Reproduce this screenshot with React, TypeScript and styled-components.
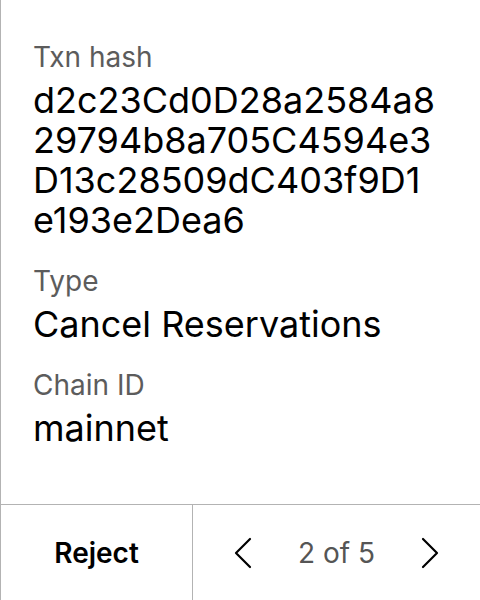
import React from 'react';
import styled, { createGlobalStyle } from 'styled-components';

const GlobalStyle = createGlobalStyle`
  *, *::before, *::after {
    box-sizing: border-box;
  }
  html, body {
    margin: 0;
    padding: 0;
    background: #fff;
  }
  body {
    font-family: "Inter", "Liberation Sans", sans-serif;
  }
`;

const Panel = styled.div`
  width: 480px;
  height: 600px;
  display: flex;
  flex-direction: column;
  border-left: 1px solid #b3b3b3;
  background: #fff;
`;

const Details = styled.div`
  flex: 1;
  padding: 40px 40px 0 32px;
  display: flex;
  flex-direction: column;
  gap: 24px;
`;

const Field = styled.div`
  display: flex;
  flex-direction: column;
  gap: 6px;
`;

const Label = styled.div`
  font-size: 28px;
  line-height: 34px;
  color: #5c5c5c;
`;

const Value = styled.div<{ $break?: boolean }>`
  font-size: 36px;
  line-height: 40px;
  color: #000;
  word-break: ${(p) => (p.$break ? 'break-all' : 'normal')};
`;

const Footer = styled.div`
  height: 96px;
  flex-shrink: 0;
  display: grid;
  grid-template-columns: 192px 1fr;
  border-top: 1px solid #b3b3b3;
`;

const RejectButton = styled.button`
  border: none;
  border-right: 1px solid #b3b3b3;
  background: none;
  font-family: inherit;
  font-size: 28px;
  font-weight: 600;
  color: #000;
  padding: 0;
  cursor: pointer;
`;

const Pager = styled.div`
  display: flex;
  align-items: center;
  justify-content: space-between;
  padding: 0 37px;
`;

const ArrowButton = styled.button`
  border: none;
  background: none;
  padding: 0;
  width: 26px;
  height: 34px;
  display: flex;
  align-items: center;
  justify-content: center;
  cursor: pointer;
`;

const PageText = styled.span`
  font-size: 28px;
  color: #555;
`;

const Chevron = ({ dir }: { dir: 'left' | 'right' }) => (
  <svg width="18" height="32" viewBox="0 0 18 32" fill="none">
    <path
      d={dir === 'left' ? 'M16 2 L2 16 L16 30' : 'M2 2 L16 16 L2 30'}
      stroke="#000"
      strokeWidth="2.2"
      strokeLinecap="round"
      strokeLinejoin="round"
    />
  </svg>
);

export default function App() {
  return (
    <>
      <GlobalStyle />
      <Panel>
        <Details>
          <Field>
            <Label>Txn hash</Label>
            <Value $break>d2c23Cd0D28a2584a829794b8a705C4594e3D13c28509dC403f9D1e193e2Dea6</Value>
          </Field>
          <Field>
            <Label>Type</Label>
            <Value>Cancel Reservations</Value>
          </Field>
          <Field>
            <Label>Chain ID</Label>
            <Value>mainnet</Value>
          </Field>
        </Details>
        <Footer>
          <RejectButton>Reject</RejectButton>
          <Pager>
            <ArrowButton aria-label="Previous">
              <Chevron dir="left" />
            </ArrowButton>
            <PageText>2 of 5</PageText>
            <ArrowButton aria-label="Next">
              <Chevron dir="right" />
            </ArrowButton>
          </Pager>
        </Footer>
      </Panel>
    </>
  );
}
